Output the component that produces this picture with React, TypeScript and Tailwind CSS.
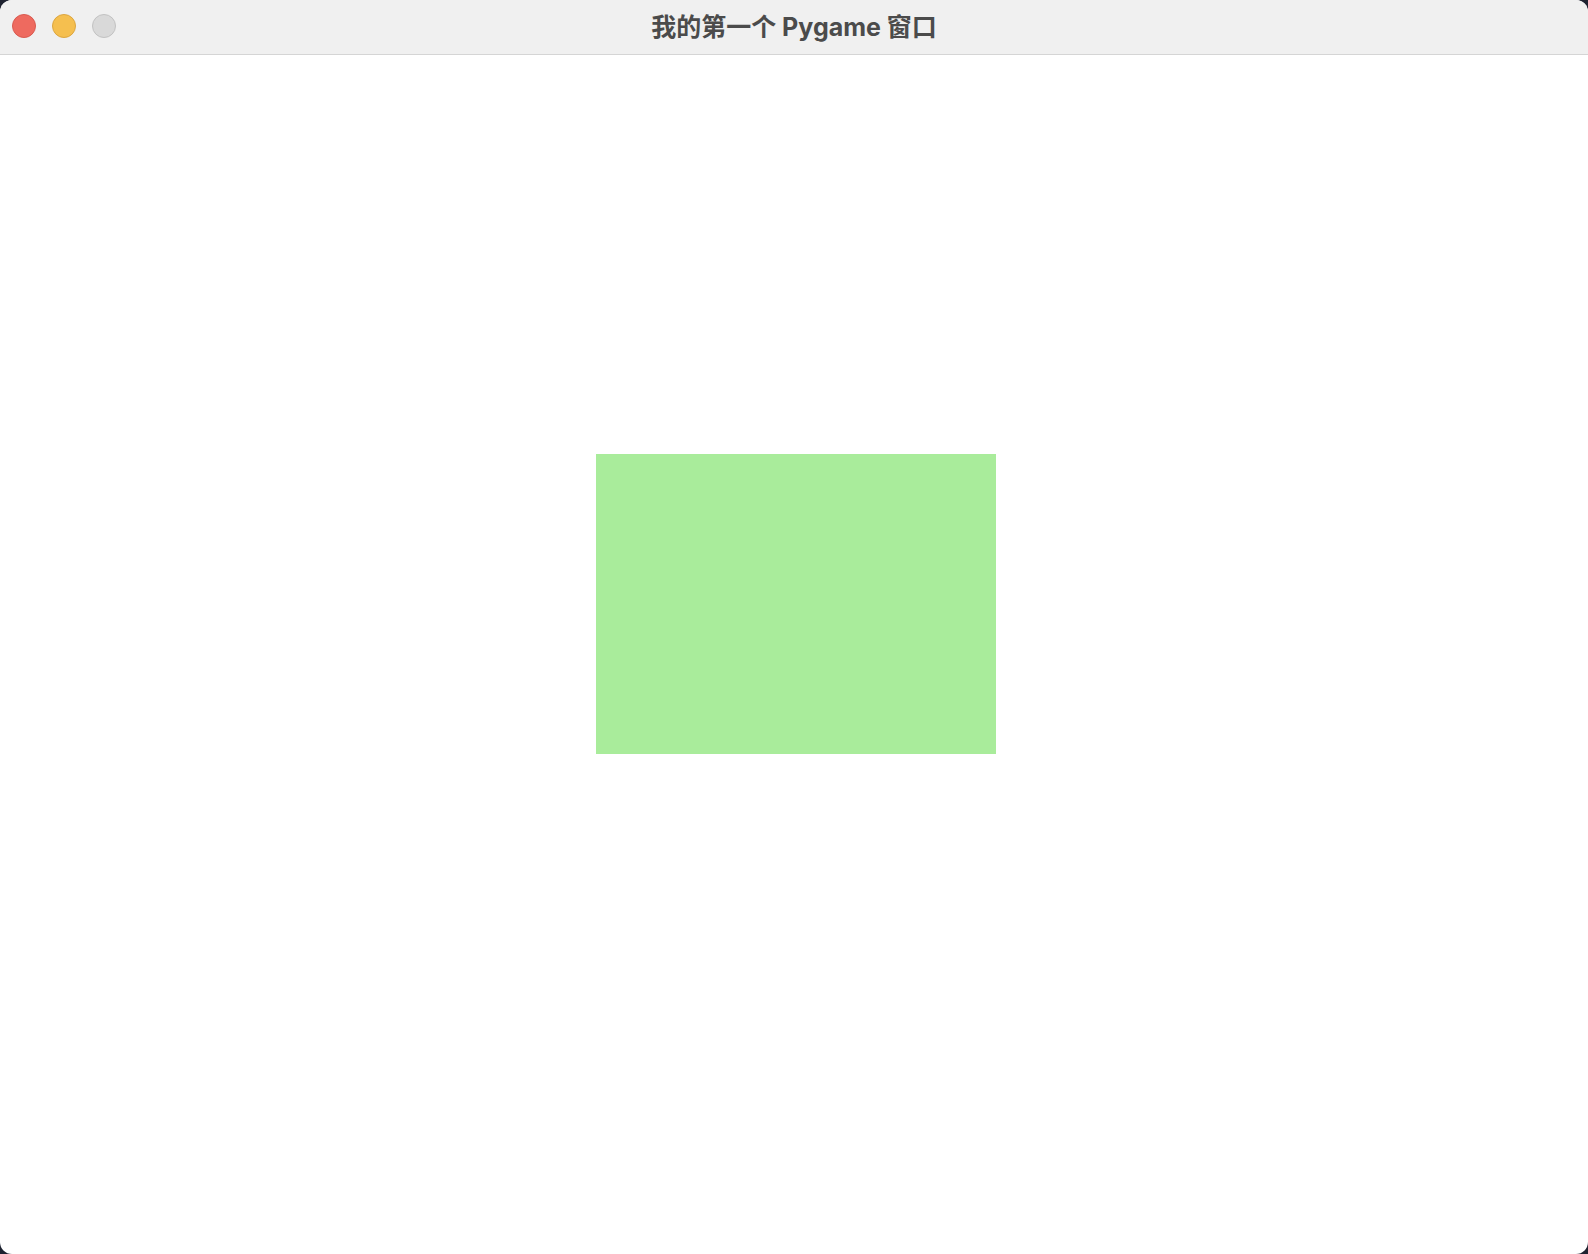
export default function App() {
  return (
    <div className="w-[1588px] h-[1254px] bg-[#1e2230]">
      <div className="flex flex-col w-full h-full rounded-[12px] overflow-hidden bg-white">
        <header className="relative flex items-center justify-center h-[55px] shrink-0 bg-[#f0f0f0] border-b border-[#d5d5d5]">
          <div className="absolute left-[12px] top-[14px] flex gap-[16px]">
            <span className="w-[24px] h-[24px] rounded-full bg-[#ee6a5f] border border-[#d95a50]" />
            <span className="w-[24px] h-[24px] rounded-full bg-[#f5bf4f] border border-[#dca640]" />
            <span className="w-[24px] h-[24px] rounded-full bg-[#d9d9d9] border border-[#c2c2c2]" />
          </div>
          <h1 className="text-[25px] font-bold text-[#4b4b4b] font-['Inter','Noto_Sans_CJK_SC',sans-serif] leading-none">
            我的第一个 Pygame 窗口
          </h1>
        </header>
        <main className="flex-1 pt-[399px] pl-[596px]">
          <div className="w-[400px] h-[300px] bg-[#a9ec9b]" />
        </main>
      </div>
    </div>
  );
}
